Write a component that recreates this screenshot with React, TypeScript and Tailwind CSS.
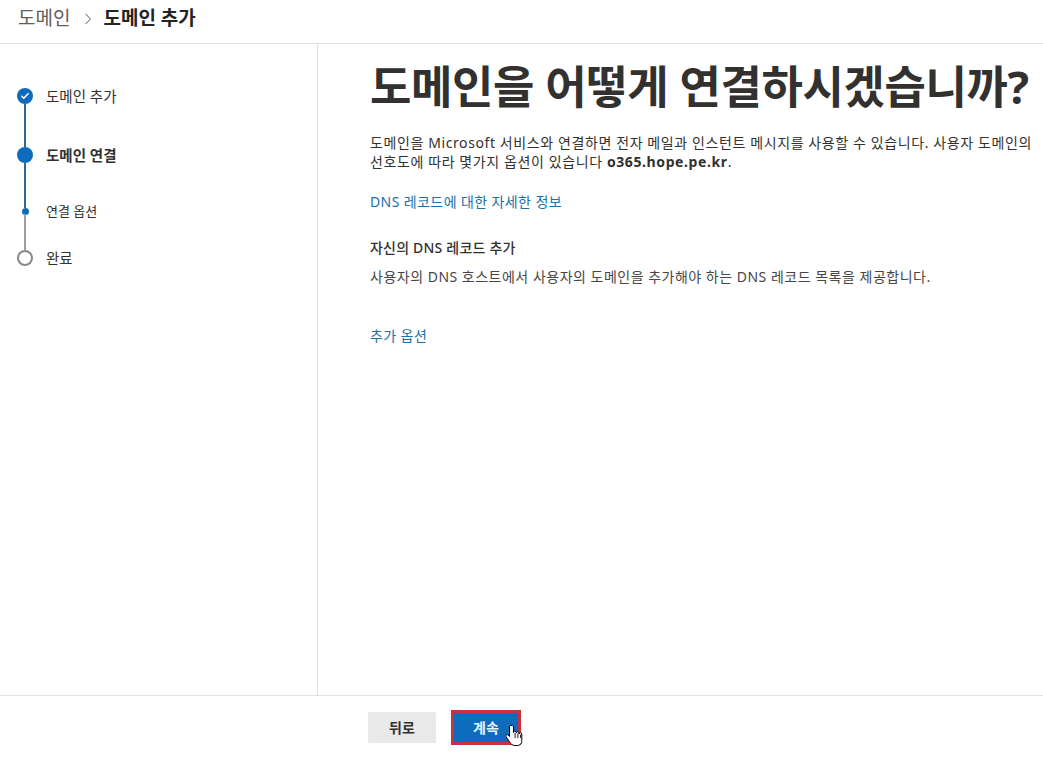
import React from "react";

const FONT = "font-['Segoe_UI','Noto_Sans','Noto_Sans_CJK_KR',sans-serif]";

/* ─── Stepper ─── */

function Connector({ h, color }: { h: string; color: string }) {
  return <div className={`ml-[7px] w-[2px] ${h} ${color}`} />;
}

function Stepper() {
  return (
    <div className="flex flex-col pl-[17px] pt-[44px]">
      <div className="flex items-center gap-[13px]">
        <div className="flex h-4 w-4 items-center justify-center rounded-full bg-[#0f6cbd]">
          <svg viewBox="0 0 16 16" className="h-[10px] w-[10px]">
            <path d="M3 8.5l3 3L13 4.5" fill="none" stroke="#fff" strokeWidth="2.4" strokeLinecap="round" strokeLinejoin="round" />
          </svg>
        </div>
        <span className="text-[14.5px] leading-4 text-[#323130]">도메인 추가</span>
      </div>
      <Connector h="h-[43px]" color="bg-[#2b6a98]" />
      <div className="flex items-center gap-[13px]">
        <div className="h-4 w-4 rounded-full bg-[#0f6cbd]" />
        <span className="text-[14.5px] font-semibold leading-4 text-[#323130]">도메인 연결</span>
      </div>
      <Connector h="h-[45px]" color="bg-[#2b6a98]" />
      <div className="flex items-center gap-[13px]">
        <div className="flex h-[6px] w-4 items-center justify-center">
          <div className="h-[7px] w-[7px] rounded-full bg-[#0f6cbd]" />
        </div>
        <span className="text-[13px] leading-[6px] text-[#323130]">연결 옵션</span>
      </div>
      <Connector h="h-[36px]" color="bg-[#a19f9d]" />
      <div className="flex items-center gap-[13px]">
        <div className="h-4 w-4 rounded-full border-2 border-[#8a8886] bg-white" />
        <span className="text-[14.5px] leading-4 text-[#323130]">완료</span>
      </div>
    </div>
  );
}

/* ─── Hand cursor (screenshot artefact) ─── */

function HandCursor() {
  return (
    <svg viewBox="0 0 17 24" className="pointer-events-none absolute left-[55px] top-[14px] h-[24px] w-[17px]">
      <path
        d="M5 1.5c-.9 0-1.5.6-1.5 1.5v9.5l-1.2-1.3c-.7-.7-1.7-.7-2.2 0-.4.5-.3 1.2.1 1.8l3.6 5.3c1 1.6 2.6 3.2 5.2 3.2h2.4c2.7 0 4.4-2 4.4-4.7V10c0-.8-.6-1.4-1.4-1.4-.7 0-1.3.6-1.3 1.4v-.9c0-.8-.6-1.4-1.4-1.4-.8 0-1.4.6-1.4 1.4V8.5c0-.8-.6-1.4-1.4-1.4s-1.4.6-1.4 1.4V3c0-.9-.6-1.5-1.5-1.5z"
        fill="#fff"
        stroke="#000"
        strokeWidth="1"
      />
      <path d="M9.1 9v5M11.9 9.5v4.5M14.6 10.5v3.5" stroke="#000" strokeWidth="0.9" />
    </svg>
  );
}

export default function App() {
  return (
    <div className={`flex h-[759px] w-[1043px] flex-col overflow-hidden bg-white ${FONT}`}>
      {/* Breadcrumb */}
      <header className="flex h-[44px] shrink-0 items-center border-b border-[#e1dfdd] pb-[6px] pl-[18px]">
        <span className="text-[19px] text-[#605e5c]">도메인</span>
        <svg viewBox="0 0 10 16" className="ml-[14px] mr-[11px] h-[14px] w-[8px]">
          <path d="M2 1.5l6 6.5-6 6.5" fill="none" stroke="#8a8886" strokeWidth="1.3" />
        </svg>
        <span className="text-[19px] font-bold text-[#242424]">도메인 추가</span>
      </header>

      {/* Body */}
      <div className="flex min-h-0 flex-1">
        <aside className="w-[318px] shrink-0 border-r border-[#e1dfdd]">
          <Stepper />
        </aside>

        <main className="min-w-0 flex-1 overflow-hidden pl-[52px] pt-[15px]">
          <h1 className="whitespace-nowrap text-[45px] font-bold leading-[56px] tracking-[-0.4px] text-[#323130]">
            도메인을 어떻게 연결하시겠습니까?
          </h1>
          <p className="mt-[18px] whitespace-nowrap text-[14px] leading-[19px] tracking-[0.6px] text-[#323130]">
            도메인을 Microsoft 서비스와 연결하면 전자 메일과 인스턴트 메시지를 사용할 수 있습니다. 사용자 도메인의
            <br />
            선호도에 따라 몇가지 옵션이 있습니다 <span className="font-bold">o365.hope.pe.kr</span>.
          </p>
          <a className="mt-[21px] block text-[14px] leading-5 tracking-[0.4px] text-[#1e6fa6]">DNS 레코드에 대한 자세한 정보</a>
          <h2 className="mt-[26px] text-[14px] font-medium leading-5 tracking-[0.2px] text-[#323130]">자신의 DNS 레코드 추가</h2>
          <p className="mt-[9px] text-[14px] leading-5 tracking-[0.5px] text-[#484644]">
            사용자의 DNS 호스트에서 사용자의 도메인을 추가해야 하는 DNS 레코드 목록을 제공합니다.
          </p>
          <a className="mt-[39px] block text-[14px] leading-5 tracking-[0.4px] text-[#1e6fa6]">추가 옵션</a>
        </main>
      </div>

      {/* Footer */}
      <footer className="flex h-[64px] shrink-0 items-center gap-[15px] border-t border-[#e1dfdd] pl-[368px]">
        <button type="button" className="h-[31px] w-[68px] rounded-[2px] bg-[#e9e9e9] text-[14px] font-bold text-[#323130]">
          뒤로
        </button>
        <div className="relative">
          <button
            type="button"
            className="h-[35px] w-[70px] border-[3px] border-[#c8323a] bg-[#0f6cbd] text-[14px] font-bold text-[#e6f6ff]"
          >
            계속
          </button>
          <HandCursor />
        </div>
      </footer>
    </div>
  );
}
